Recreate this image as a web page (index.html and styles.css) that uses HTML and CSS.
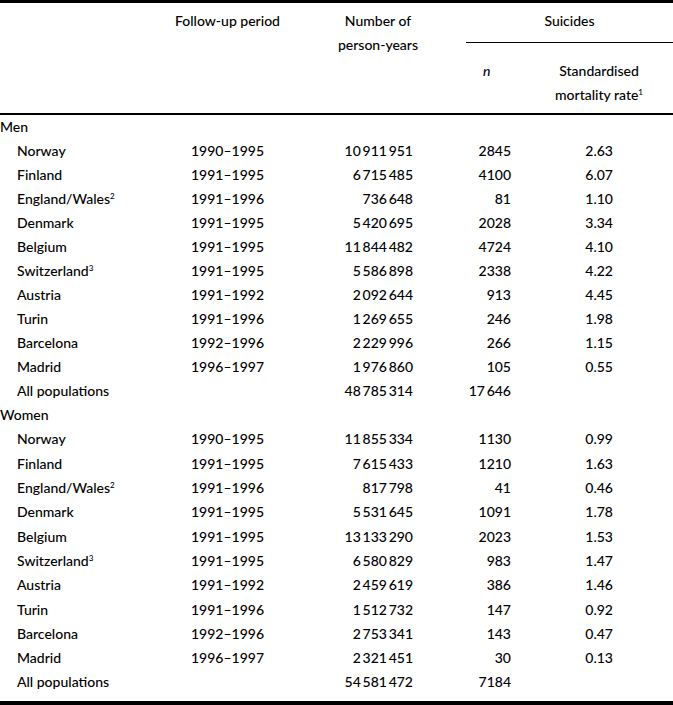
FILE: index.html
```html
<!DOCTYPE html>
<html lang="en">
<head>
<meta charset="utf-8">
<title>Suicides by population</title>
<link rel="stylesheet" href="styles.css">
</head>
<body>
<table class="tbl">
  <colgroup>
    <col class="c-name">
    <col class="c-period">
    <col class="c-py">
    <col class="c-n">
    <col class="c-smr">
  </colgroup>
  <thead>
    <tr class="h1">
      <th rowspan="2" class="blank"></th>
      <th rowspan="2" class="hc">Follow-up period</th>
      <th rowspan="2" class="hc">Number of<br>person-years</th>
      <th colspan="2" class="suicides">Suicides</th>
    </tr>
    <tr class="h2">
      <th class="hn"><i>n</i></th>
      <th class="hsmr">Standardised<br>mortality rate<sup>1</sup></th>
    </tr>
  </thead>
  <tbody class="men">
    <tr><td colspan="5" class="group">Men</td></tr>
    <tr><td class="name">Norway</td><td class="period">1990–1995</td><td class="num">10&#8201;911&#8201;951</td><td class="n">2845</td><td class="smr">2.63</td></tr>
    <tr><td class="name">Finland</td><td class="period">1991–1995</td><td class="num">6&#8201;715&#8201;485</td><td class="n">4100</td><td class="smr">6.07</td></tr>
    <tr><td class="name">England/Wales<sup>2</sup></td><td class="period">1991–1996</td><td class="num">736&#8201;648</td><td class="n">81</td><td class="smr">1.10</td></tr>
    <tr><td class="name">Denmark</td><td class="period">1991–1995</td><td class="num">5&#8201;420&#8201;695</td><td class="n">2028</td><td class="smr">3.34</td></tr>
    <tr><td class="name">Belgium</td><td class="period">1991–1995</td><td class="num">11&#8201;844&#8201;482</td><td class="n">4724</td><td class="smr">4.10</td></tr>
    <tr><td class="name">Switzerland<sup>3</sup></td><td class="period">1991–1995</td><td class="num">5&#8201;586&#8201;898</td><td class="n">2338</td><td class="smr">4.22</td></tr>
    <tr><td class="name">Austria</td><td class="period">1991–1992</td><td class="num">2&#8201;092&#8201;644</td><td class="n">913</td><td class="smr">4.45</td></tr>
    <tr><td class="name">Turin</td><td class="period">1991–1996</td><td class="num">1&#8201;269&#8201;655</td><td class="n">246</td><td class="smr">1.98</td></tr>
    <tr><td class="name">Barcelona</td><td class="period">1992–1996</td><td class="num">2&#8201;229&#8201;996</td><td class="n">266</td><td class="smr">1.15</td></tr>
    <tr><td class="name">Madrid</td><td class="period">1996–1997</td><td class="num">1&#8201;976&#8201;860</td><td class="n">105</td><td class="smr">0.55</td></tr>
    <tr><td class="name">All populations</td><td class="period"></td><td class="num">48&#8201;785&#8201;314</td><td class="n">17&#8201;646</td><td class="smr"></td></tr>
  </tbody>
  <tbody class="women">
    <tr><td colspan="5" class="group">Women</td></tr>
    <tr><td class="name">Norway</td><td class="period">1990–1995</td><td class="num">11&#8201;855&#8201;334</td><td class="n">1130</td><td class="smr">0.99</td></tr>
    <tr><td class="name">Finland</td><td class="period">1991–1995</td><td class="num">7&#8201;615&#8201;433</td><td class="n">1210</td><td class="smr">1.63</td></tr>
    <tr><td class="name">England/Wales<sup>2</sup></td><td class="period">1991–1996</td><td class="num">817&#8201;798</td><td class="n">41</td><td class="smr">0.46</td></tr>
    <tr><td class="name">Denmark</td><td class="period">1991–1995</td><td class="num">5&#8201;531&#8201;645</td><td class="n">1091</td><td class="smr">1.78</td></tr>
    <tr><td class="name">Belgium</td><td class="period">1991–1995</td><td class="num">13&#8201;133&#8201;290</td><td class="n">2023</td><td class="smr">1.53</td></tr>
    <tr><td class="name">Switzerland<sup>3</sup></td><td class="period">1991–1995</td><td class="num">6&#8201;580&#8201;829</td><td class="n">983</td><td class="smr">1.47</td></tr>
    <tr><td class="name">Austria</td><td class="period">1991–1992</td><td class="num">2&#8201;459&#8201;619</td><td class="n">386</td><td class="smr">1.46</td></tr>
    <tr><td class="name">Turin</td><td class="period">1991–1996</td><td class="num">1&#8201;512&#8201;732</td><td class="n">147</td><td class="smr">0.92</td></tr>
    <tr><td class="name">Barcelona</td><td class="period">1992–1996</td><td class="num">2&#8201;753&#8201;341</td><td class="n">143</td><td class="smr">0.47</td></tr>
    <tr><td class="name">Madrid</td><td class="period">1996–1997</td><td class="num">2&#8201;321&#8201;451</td><td class="n">30</td><td class="smr">0.13</td></tr>
    <tr class="last"><td class="name">All populations</td><td class="period"></td><td class="num">54&#8201;581&#8201;472</td><td class="n">7184</td><td class="smr"></td></tr>
  </tbody>
</table>
</body>
</html>
```

FILE: styles.css
```css
html, body {
  margin: 0;
  padding: 0;
  background: #ffffff;
}

body {
  font-family: Lato, "Open Sans", "Liberation Sans", sans-serif;
  font-size: 14px;
  color: #000000;
}

.tbl {
  width: 673px;
  table-layout: fixed;
  border-collapse: separate;
  border-spacing: 0;
}

.c-name { width: 165px; }
.c-period { width: 125px; }
.c-py { width: 176px; }
.c-n { width: 59px; }
.c-smr { width: 148px; }

.tbl th,
.tbl td {
  padding: 0;
  line-height: 24px;
  font-weight: 500;
}

.tbl th {
  vertical-align: top;
  text-align: center;
}

.h1 th {
  border-top: 3px solid #000;
  padding-top: 6px;
}

.h1 th.blank,
.h1 th.hc {
  border-bottom: 2px solid #000;
}

.h1 .suicides {
  padding-bottom: 9px;
  border-bottom: 1px solid #000;
}

.h2 th {
  padding-top: 16px;
  padding-bottom: 6px;
  border-bottom: 2px solid #000;
}

.h2 .hn {
  text-align: left;
  padding-left: 17px;
}

sup {
  font-size: 8px;
  line-height: 0;
  vertical-align: 5px;
}

.tbl td {
  height: 24px;
  vertical-align: middle;
  white-space: nowrap;
}

.women td {
  height: 24.3px;
}

.group {
  text-align: left;
}

.name {
  padding-left: 17px !important;
}

.period {
  text-align: center;
}

.num {
  text-align: right;
  padding-right: 53px !important;
}

.n {
  text-align: right;
  padding-right: 14px !important;
}

.smr {
  text-align: right;
  padding-right: 60px !important;
}

.last td {
  vertical-align: top;
  padding-bottom: 6px;
  border-bottom: 5px solid #000;
}
```
